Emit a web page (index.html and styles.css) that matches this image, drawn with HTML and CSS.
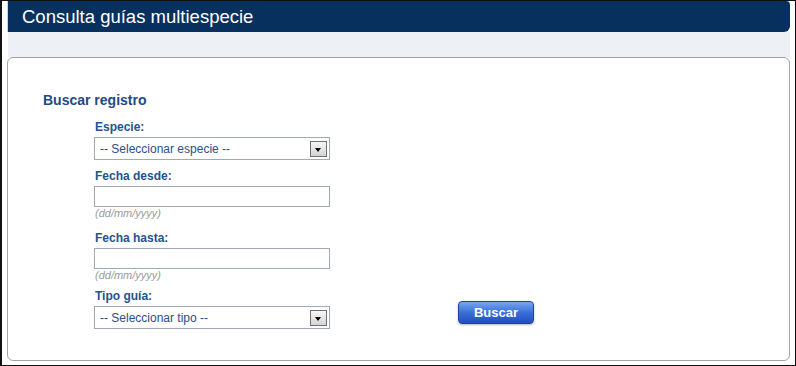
FILE: index.html
```html
<!DOCTYPE html>
<html>
<head>
  <meta charset="utf-8">
  <title>Consulta guías multiespecie</title>
  <link rel="stylesheet" href="styles.css">
</head>
<body>
  <div class="frame">
    <div class="header">Consulta guías multiespecie</div>
    <div class="band"></div>
    <div class="panel">
      <h2>Buscar registro</h2>
      <div class="form">
        <div class="field">
          <label>Especie:</label>
          <div class="select">
            <span>-- Seleccionar especie --</span>
            <span class="arrow"></span>
          </div>
        </div>
        <div class="field date-from">
          <label>Fecha desde:</label>
          <input type="text" class="text">
          <div class="hint">(dd/mm/yyyy)</div>
        </div>
        <div class="field date-to">
          <label>Fecha hasta:</label>
          <input type="text" class="text">
          <div class="hint">(dd/mm/yyyy)</div>
        </div>
        <div class="last-row">
          <div class="field">
            <label>Tipo guía:</label>
            <div class="select">
              <span>-- Seleccionar tipo --</span>
              <span class="arrow"></span>
            </div>
          </div>
          <button class="btn">Buscar</button>
        </div>
      </div>
    </div>
  </div>
</body>
</html>
```

FILE: styles.css
```css
body {
  margin: 0;
  background: #fff;
  font-family: 'Liberation Sans', Arial, sans-serif;
}
.frame {
  width: 796px;
  height: 366px;
  box-sizing: border-box;
  border: 1px solid #111;
  border-left: 2px solid #111;
  background: #fff;
  display: flex;
  flex-direction: column;
  padding: 0 5px;
}
.header {
  height: 31px;
  background: #08305f;
  color: #fff;
  font-size: 18.5px;
  line-height: 31px;
  padding-left: 14px;
  border-radius: 0 4px 6px 0;
  border-left: 1px solid #c9d3e0;
}
.band {
  height: 25px;
  background: #edf1f6;
  border-left: 1px solid #fafbfd;
}
.panel {
  height: 304px;
  box-sizing: border-box;
  border: 1px solid #a3a3a3;
  border-radius: 6px;
  background: #fff;
  padding: 33px 0 0 35px;
}
h2 {
  margin: 0 0 11px 0;
  font-size: 14px;
  line-height: 18px;
  color: #1c4a8c;
}
.form {
  padding-left: 51px;
  display: flex;
  flex-direction: column;
}
.field {
  display: flex;
  flex-direction: column;
  width: 236px;
  margin-bottom: 9px;
}
.date-from {
  margin-bottom: 12px;
}
.date-to {
  margin-bottom: 8px;
}
label {
  font-size: 12px;
  font-weight: bold;
  color: #24538f;
  line-height: 14px;
  margin-bottom: 3px;
  padding-left: 1px;
}
.select {
  height: 23px;
  box-sizing: border-box;
  border: 1px solid #9fa9b8;
  display: flex;
  align-items: center;
  justify-content: space-between;
  padding: 0 2px 0 5px;
  font-size: 12px;
  color: #2c4e8a;
  background: #fff;
}
.arrow {
  width: 17px;
  height: 16px;
  box-sizing: border-box;
  border: 1px solid #707070;
  background: linear-gradient(#f6f6f6, #d4d4d4);
  position: relative;
}
.arrow::after {
  content: "";
  position: absolute;
  left: 4px;
  top: 6px;
  border-left: 3.5px solid transparent;
  border-right: 3.5px solid transparent;
  border-top: 4px solid #000;
}
.text {
  height: 21px;
  box-sizing: border-box;
  border: 1px solid #9fa9b8;
  margin: 0;
  padding: 0 4px;
  width: 236px;
}
.hint {
  font-size: 11px;
  font-style: italic;
  color: #9a9a9a;
  line-height: 12px;
  padding-left: 1px;
}
.last-row {
  display: flex;
  align-items: flex-end;
}
.btn {
  margin: 0 0 14px 128px;
  width: 76px;
  height: 23px;
  border: 1px solid #23418c;
  border-radius: 4px;
  background: linear-gradient(#78a6ef, #3a6fd8 50%, #1e4fc0);
  color: #fff;
  font-family: 'Liberation Sans', Arial, sans-serif;
  font-size: 13px;
  font-weight: bold;
  padding: 0;
  box-shadow: 0 1px 2px rgba(0, 0, 0, 0.3);
}
```
